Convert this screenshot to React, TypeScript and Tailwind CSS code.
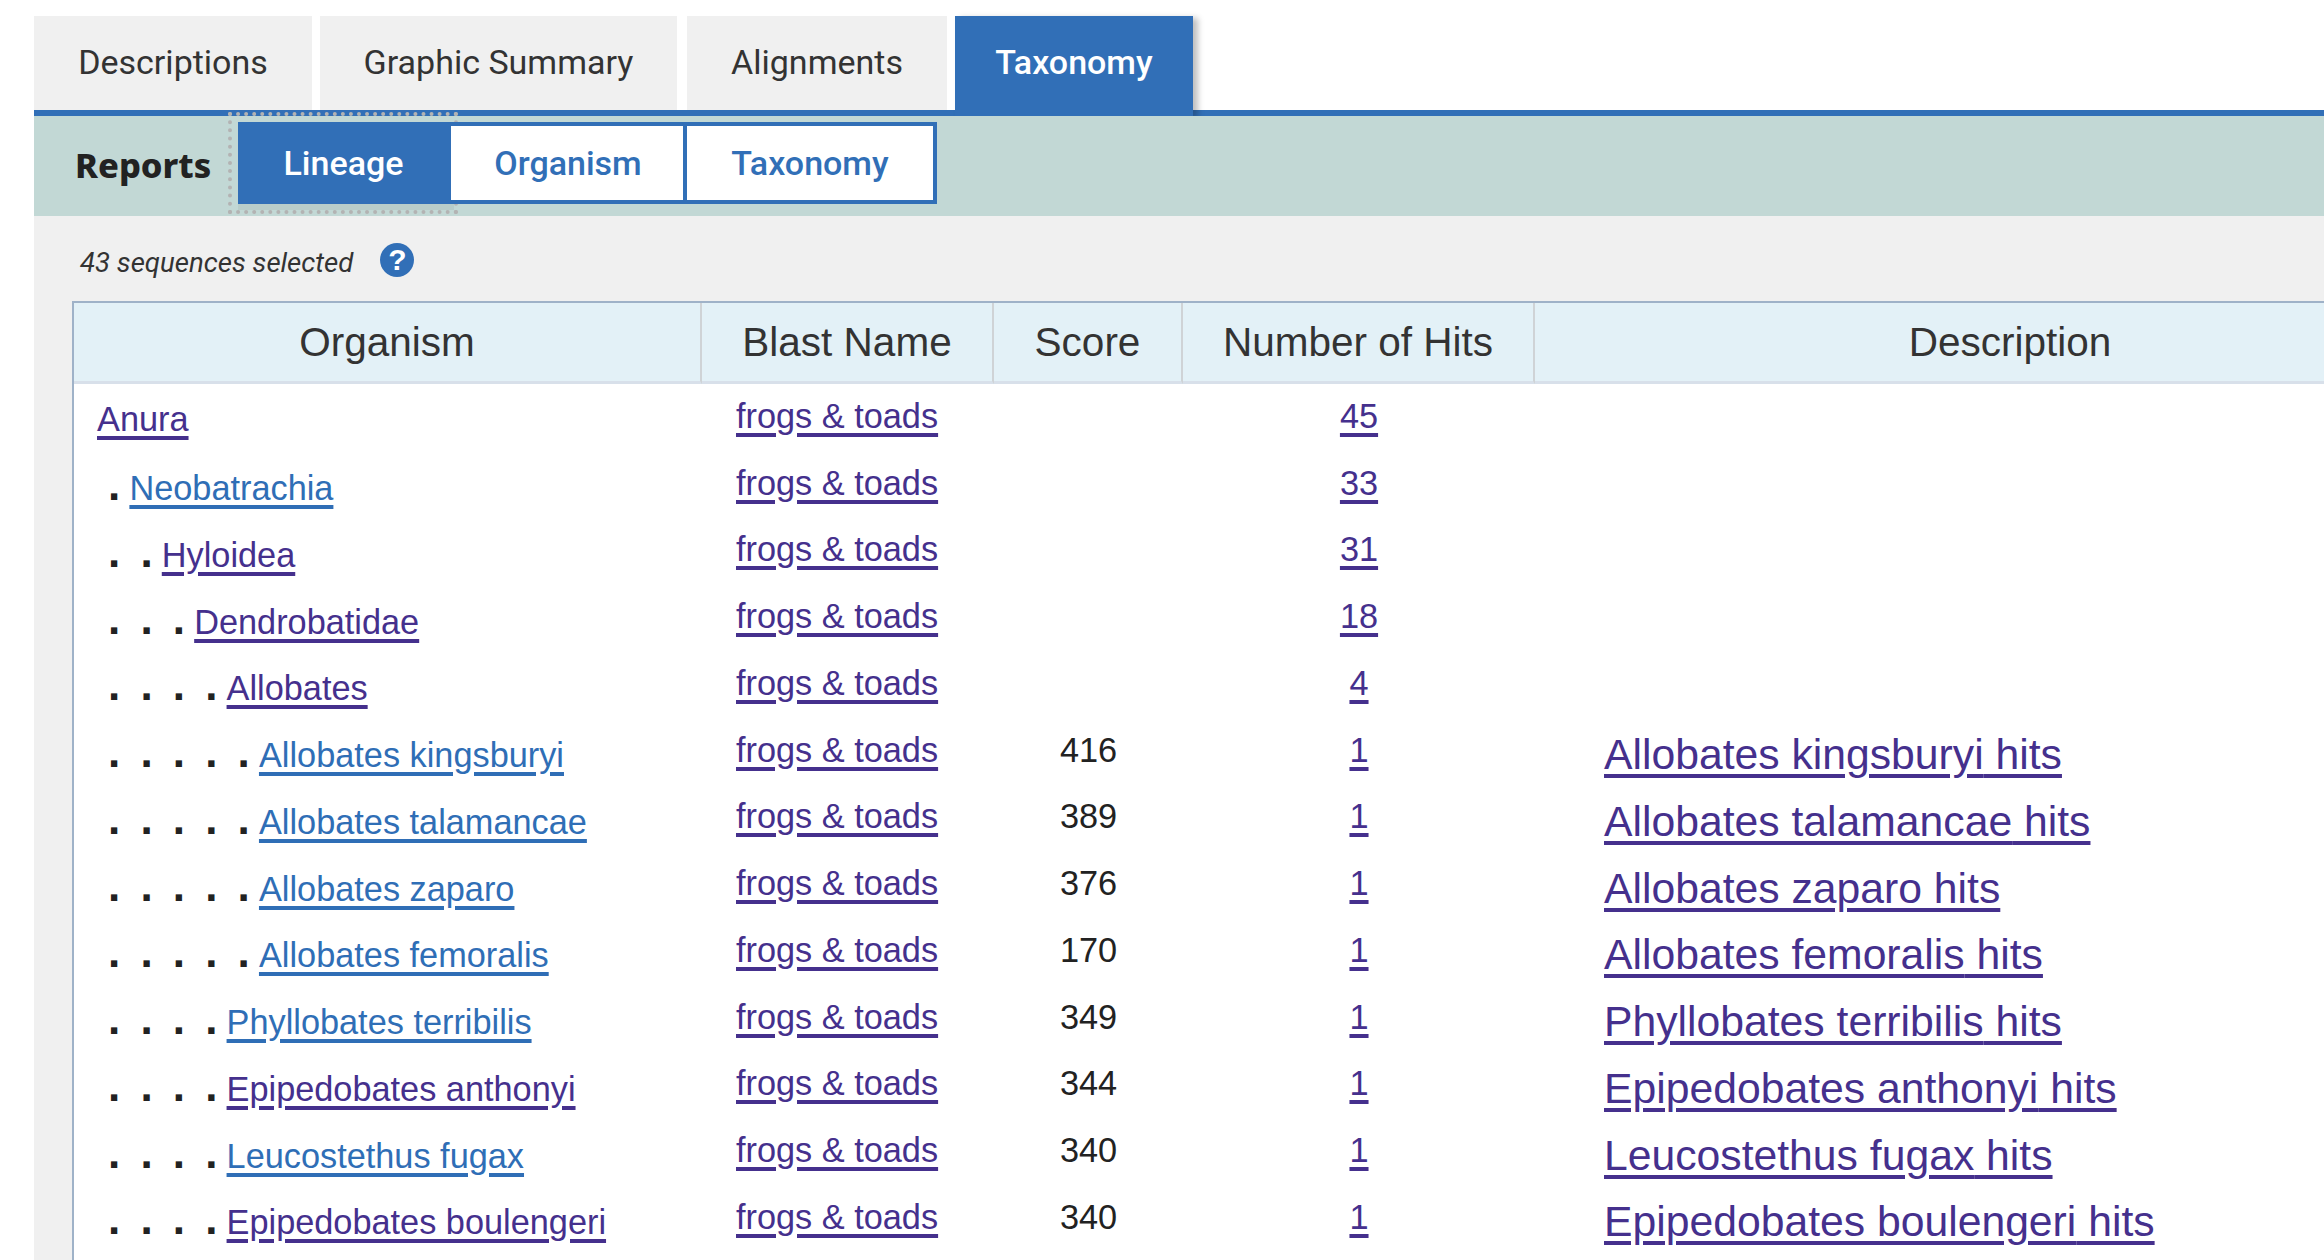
const tabs = [
  { label: 'Descriptions', width: 'w-[278px]' },
  { label: 'Graphic Summary', width: 'w-[357px]' },
  { label: 'Alignments', width: 'w-[260px]' },
];

type Row = {
  name: string;
  level: number;
  visited?: boolean;
  hits: number;
  score?: number;
};

const rows: Row[] = [
  { name: 'Anura', level: 0, visited: true, hits: 45 },
  { name: 'Neobatrachia', level: 1, hits: 33 },
  { name: 'Hyloidea', level: 2, visited: true, hits: 31 },
  { name: 'Dendrobatidae', level: 3, visited: true, hits: 18 },
  { name: 'Allobates', level: 4, visited: true, hits: 4 },
  { name: 'Allobates kingsburyi', level: 5, hits: 1, score: 416 },
  { name: 'Allobates talamancae', level: 5, hits: 1, score: 389 },
  { name: 'Allobates zaparo', level: 5, hits: 1, score: 376 },
  { name: 'Allobates femoralis', level: 5, hits: 1, score: 170 },
  { name: 'Phyllobates terribilis', level: 4, hits: 1, score: 349 },
  { name: 'Epipedobates anthonyi', level: 4, visited: true, hits: 1, score: 344 },
  { name: 'Leucostethus fugax', level: 4, hits: 1, score: 340 },
  { name: 'Epipedobates boulengeri', level: 4, visited: true, hits: 1, score: 340 },
];

const purpleLink = 'text-[#45308d] underline decoration-[4px] underline-offset-[5px]';
const blueLink = 'text-[#2f6eb6] underline decoration-[4px] underline-offset-[5px]';

function Header({ label, width }: { label: string; width: string }) {
  return (
    <th className={`${width} h-[81px] border-b-[3px] border-b-[#d8e0ea] border-r-2 border-r-[#cfd3d6] pt-[1px] text-center text-[40.5px] font-normal leading-none text-[#333333] last:border-r-0`}>
      {label}
    </th>
  );
}

export default function App() {
  return (
    <div className="h-[1260px] w-[2324px] overflow-hidden bg-white pl-[34px] pt-4 font-['Liberation_Sans',Arial,sans-serif]">
      <div className="flex h-[94px] font-['Roboto',sans-serif] text-[34px] text-[#333333]">
        {tabs.map((tab, index) => (
          <div
            key={tab.label}
            className={`${tab.width} ${index === 1 ? 'mr-[10px]' : 'mr-2'} flex items-center justify-center bg-[#f0f0f0] pb-[2px]`}
          >
            {tab.label}
          </div>
        ))}
        <div className="flex h-[100px] w-[238px] items-center justify-center bg-[#316fb7] pb-[8px] font-medium text-white shadow-[5px_2px_6px_rgba(0,0,0,0.25)]">
          Taxonomy
        </div>
      </div>
      <div className="h-[6px] bg-[#316fb7]" />
      <div className="relative flex h-[100px] items-start bg-[#c2d8d5] pt-[6px] font-['Roboto',sans-serif] text-[34px] font-medium">
        <div className="h-[82px] w-[204px] pl-[41px] pt-[17px] font-['Noto_Sans',sans-serif] text-[34.5px] font-extrabold text-[#222222]">
          Reports
        </div>
        <div className="relative z-10 flex h-[82px] w-[699px] border-4 border-[#316fb7] bg-white text-[#316fb7]">
          <div className="flex w-[209px] items-center justify-center bg-[#316fb7] pr-[6px] text-white">Lineage</div>
          <div className="flex w-[236px] items-center justify-center border-r-4 border-[#316fb7] pl-[2px]">Organism</div>
          <div className="flex flex-1 items-center justify-center">Taxonomy</div>
        </div>
        <div className="absolute left-[194px] top-[-4px] h-[102px] w-[230px] border-4 border-dotted border-[#b3b3b3]">
          <div className="absolute bottom-0 left-[6px] right-0 h-[6px] bg-black/5" />
        </div>
      </div>
      <div className="h-[1044px] bg-[#f0f0f0] pl-[38px]">
        <div className="flex h-[85px] items-center pl-[8px] pt-[5px] text-[27.6px] italic text-[#333333]">
          <span className="pt-[3px] font-['Roboto',sans-serif]">43 sequences selected</span>
          <span className="mb-[3px] ml-[27px] flex h-[34px] w-[34px] items-center justify-center rounded-full bg-[#316fb7] text-[30px] font-bold not-italic leading-none text-white">
            ?
          </span>
        </div>
        <table className="w-[2411px] table-fixed border-separate border-spacing-0 border-l-2 border-t-2 border-[#9fb2c8] bg-white text-[34.3px] leading-[1.2] text-[#222222]">
          <thead>
            <tr className="bg-[#e3f1f7]">
              <Header label="Organism" width="w-[628px]" />
              <Header label="Blast Name" width="w-[292px]" />
              <Header label="Score" width="w-[189px]" />
              <Header label="Number of Hits" width="w-[352px]" />
              <Header label="Description" width="w-[950px]" />
            </tr>
          </thead>
          <tbody>
            {rows.map((row, index) => (
              <tr key={`${row.name}-${index}`}>
                <td className="h-[66.75px] pl-[23px] pt-[4px]">
                  {Array.from({ length: row.level }).map((_, dot) => (
                    <span key={dot} className="inline-block w-[32.4px] pl-[11px] text-[44px] font-bold leading-none text-[#222222]">.</span>
                  ))}
                  <a className={row.visited ? purpleLink : blueLink}>{row.name}</a>
                </td>
                <td className="pb-[2px] pl-[34px]">
                  <a className={purpleLink}>frogs &amp; toads</a>
                </td>
                <td className="pb-[2px] text-center">{row.score}</td>
                <td className="pb-[2px] text-center">
                  <a className={purpleLink}>{row.hits}</a>
                </td>
                <td className="pl-[69px] pt-[7px] text-[42.7px]">
                  {row.score && <a className={purpleLink}>{row.name} hits</a>}
                </td>
              </tr>
            ))}
            <tr>
              <td className="h-[40px]" colSpan={5} />
            </tr>
          </tbody>
        </table>
      </div>
    </div>
  );
}
